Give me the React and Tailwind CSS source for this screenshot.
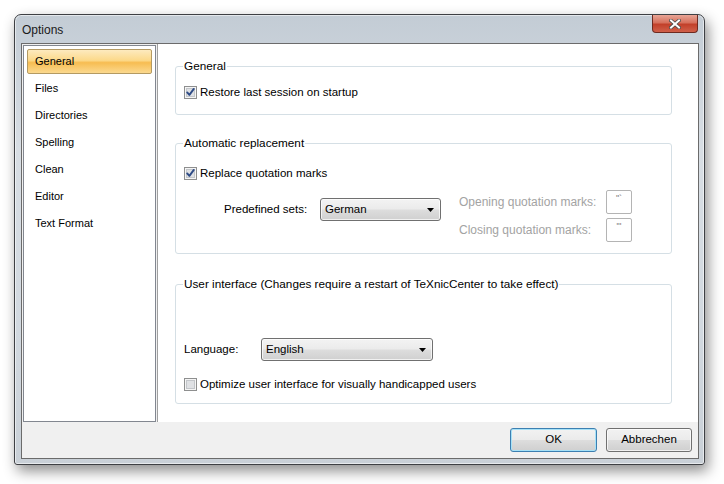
import React from 'react';

const font = { fontFamily: '"Liberation Sans", Arial, sans-serif' };

function CheckBox({ checked }) {
  return (
    <svg width="13" height="13" viewBox="0 0 13 13" className="shrink-0">
      <rect x="0.5" y="0.5" width="12" height="12" fill="#f5f5f5" stroke="#8e8f8f" />
      <rect x="2.5" y="2.5" width="8" height="8" fill="#dfe1e4" stroke="#c3c6ca" />
      {checked && (
        <path d="M3.2 6.4 L5.4 8.9 L9.8 2.9" fill="none" stroke="#2e4b86" strokeWidth="1.9" strokeLinecap="round" strokeLinejoin="round" />
      )}
    </svg>
  );
}

function Arrow() {
  return (
    <svg width="7" height="4" viewBox="0 0 7 4">
      <path d="M0 0 H7 L3.5 4 Z" fill="#000" />
    </svg>
  );
}

function Combo({ value, width }) {
  return (
    <div className={`${width} h-[23px] flex items-center justify-between pl-[4px] pr-[6px] border border-[#707070] rounded-[3px] bg-[linear-gradient(to_bottom,#f3f3f3_0%,#ebebeb_48%,#dddddd_52%,#d0d0d0_100%)] shadow-[inset_0_0_0_1px_rgba(255,255,255,0.7)]`}>
      <span className="text-[11.5px] text-black">{value}</span>
      <Arrow />
    </div>
  );
}

function Group({ title, className, children }) {
  return (
    <div className={`relative w-[497px] border border-[#d5dfe5] rounded-[3px] pl-[8px] ${className}`}>
      <span className="absolute -top-[8px] left-[7px] bg-white px-[1px] leading-[14px] text-[11.75px] text-black">{title}</span>
      {children}
    </div>
  );
}

const navItems = ['General', 'Files', 'Directories', 'Spelling', 'Clean', 'Editor', 'Text Format'];

export default function App() {
  return (
    <div className="w-[724px] h-[484px] bg-white pt-[14px] pl-[14px]" style={font}>
      <div className="w-[691px] h-[451px] flex flex-col border border-[#3e4044] rounded-t-[7px] rounded-b-[3px] bg-[linear-gradient(to_bottom,#c3ccd5_0%,#d8dee4_30%,#d2d9e0_70%,#c9d0d7_100%)] shadow-[inset_0_0_0_1px_rgba(255,255,255,0.55),3px_6px_14px_rgba(0,0,0,0.45)]">
        {/* title bar */}
        <div className="h-[28px] flex items-start justify-between pl-[7px] pr-[6px]">
          <span className="mt-[6px] text-[12px] text-[#1a1a1a]">Options</span>
          <div className="w-[46px] h-[18px] flex items-center justify-center rounded-b-[4px] border border-t-0 border-[#6e2a20] bg-[linear-gradient(to_bottom,#e8a596_0%,#d6705c_45%,#c2402a_55%,#d0604a_100%)]">
            <svg width="12" height="10" viewBox="0 0 12 10">
              <path d="M2 1.5 L10 8.5 M10 1.5 L2 8.5" stroke="#4a4a4a" strokeWidth="3.6" strokeLinecap="square" />
              <path d="M2 1.5 L10 8.5 M10 1.5 L2 8.5" stroke="#ffffff" strokeWidth="2" strokeLinecap="square" />
            </svg>
          </div>
        </div>

        {/* client area */}
        <div className="ml-[6px] w-[678px] h-[416px] flex flex-col border border-[#6b6b6b] bg-[#f0f0f0]">
          <div className="flex h-[378px]">
            <div className="mt-[1px] ml-[1px] w-[133px] h-[377px] border border-[#828790] bg-white pt-[3px] pl-[3px] flex flex-col gap-[2px]">
              {navItems.map((n, i) => (
                <div
                  key={n}
                  className={`w-[125px] h-[25px] flex items-center pl-[7px] text-[11px] text-black rounded-[2px] border ${
                    i === 0
                      ? 'border-[#b49a62] bg-[linear-gradient(to_bottom,#fdeabf_0%,#fcd98a_45%,#f7bd52_55%,#fbd98f_100%)]'
                      : 'border-transparent'
                  }`}
                >
                  {n}
                </div>
              ))}
            </div>

            <div className="ml-[1px] flex-1 border-l border-[#a0a0a0] bg-white pt-[22px] pl-[17px] flex flex-col">
              <Group title="General" className="h-[49px] pt-[18px]">
                <div className="flex items-center gap-[3px]">
                  <CheckBox checked />
                  <span className="text-[11.5px] leading-[13px] pt-[1px]">Restore last session on startup</span>
                </div>
              </Group>

              <Group title="Automatic replacement" className="mt-[28px] h-[111px] pt-[22px]">
                <div className="flex items-center gap-[3px]">
                  <CheckBox checked />
                  <span className="text-[11.5px] leading-[13px] pt-[1px]">Replace quotation marks</span>
                </div>
                <div className="mt-[10px] flex items-start">
                  <div className="mt-[8px] ml-[40px] flex items-center">
                    <span className="w-[96px] text-[11.5px]">Predefined sets:</span>
                    <Combo value="German" width="w-[121px]" />
                  </div>
                  <div className="ml-[18px] flex flex-col gap-[4px] text-[#a3a3a3]">
                    <div className="flex items-center h-[24px]">
                      <span className="w-[147px] text-[12px]">Opening quotation marks:</span>
                      <div className="w-[26px] h-[24px] border border-[#b4b4b4] rounded-[2px] text-center text-[9px] leading-none pt-[3px] text-[#7a7a7a]">{'"`'}</div>
                    </div>
                    <div className="flex items-center h-[24px]">
                      <span className="w-[147px] text-[12px]">Closing quotation marks:</span>
                      <div className="w-[26px] h-[24px] border border-[#b4b4b4] rounded-[2px] text-center text-[9px] leading-none pt-[3px] text-[#7a7a7a]">{"\"'"}</div>
                    </div>
                  </div>
                </div>
              </Group>

              <Group title="User interface (Changes require a restart of TeXnicCenter to take effect)" className="mt-[30px] h-[120px] pt-[53px]">
                <div className="flex items-center">
                  <span className="w-[77px] text-[11.5px]">Language:</span>
                  <Combo value="English" width="w-[172px]" />
                </div>
                <div className="mt-[16px] flex items-center gap-[3px]">
                  <CheckBox />
                  <span className="text-[11.5px] leading-[13px] pt-[1px]">Optimize user interface for visually handicapped users</span>
                </div>
              </Group>
            </div>
          </div>

          {/* buttons */}
          <div className="flex-1 flex justify-end items-start pt-[6px] pr-[6px] gap-[9px]">
            <button className="w-[87px] h-[24px] text-[11.5px] text-black border border-[#3c7fb1] rounded-[3px] bg-[linear-gradient(to_bottom,#f2f2f2_0%,#ebebeb_48%,#dddddd_52%,#cfcfcf_100%)] shadow-[inset_0_0_0_1px_#a6e1f7]">
              OK
            </button>
            <button className="w-[86px] h-[24px] text-[11.5px] text-black border border-[#707070] rounded-[3px] bg-[linear-gradient(to_bottom,#f2f2f2_0%,#ebebeb_48%,#dddddd_52%,#cfcfcf_100%)] shadow-[inset_0_0_0_1px_rgba(255,255,255,0.7)]">
              Abbrechen
            </button>
          </div>
        </div>
      </div>
    </div>
  );
}
